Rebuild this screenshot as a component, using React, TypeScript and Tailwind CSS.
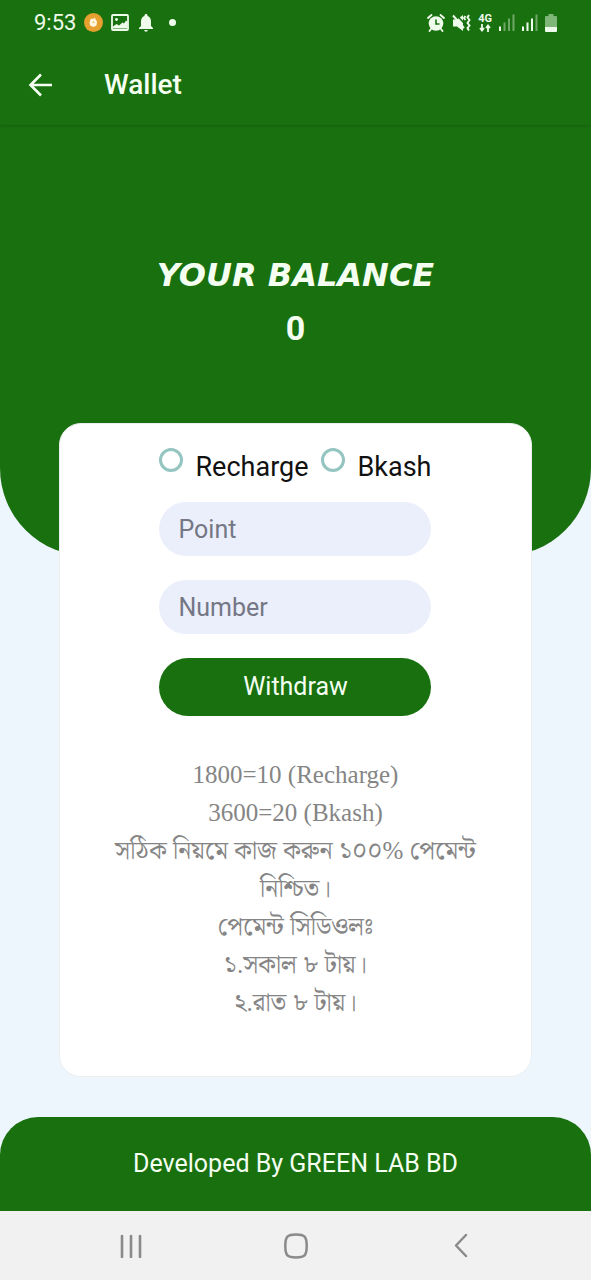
import { useState } from "react";

const notices = [
  "1800=10 (Recharge)",
  "3600=20 (Bkash)",
  "সঠিক নিয়মে কাজ করুন ১০০% পেমেন্ট নিশ্চিত।",
  "পেমেন্ট সিডিওলঃ",
  "১.সকাল ৮ টায়।",
  "২.রাত ৮ টায়।",
];

function PictureIcon() {
  return (
    <svg width="18" height="17" viewBox="0 0 18 17" aria-hidden="true">
      <rect x="1" y="1" width="16" height="15" rx="1" fill="none" stroke="#effcec" strokeWidth="1.8" />
      <circle cx="5.5" cy="5.5" r="1.4" fill="#effcec" />
      <path d="M2 12.5 5.5 10l2.500 1.500 3.500-3L13 9.500l2-3 1.500 1.500V14.500H2Z" fill="#effcec" />
    </svg>
  );
}

function BellIcon() {
  return (
    <svg width="14" height="18" viewBox="0 0 14 18" aria-hidden="true">
      <path d="M7 0c.9 0 1.500.6 1.500 1.500v.6C10.900 2.800 12 5 12 7.500v4.500l2 2v1H0v-1l2-2V7.500C2 5 3.100 2.800 5.500 2.100v-.6C5.500.6 6.100 0 7 0ZM5.200 16h3.600a1.800 1.800 0 0 1-3.600 0Z" fill="#effcec" />
    </svg>
  );
}

function AppBadge() {
  return (
    <svg width="19" height="19" viewBox="0 0 19 19" aria-hidden="true">
      <circle cx="9.5" cy="9.500" r="9.500" fill="#e5a02f" />
      <path d="M7 5.500 9 6l2-1.500.5 2 1.500 2-.5 4L9.500 14 6 12.500 5.500 9.500Z" fill="#fff7e2" />
      <path d="m8.500 10 1-1.500 1 1.500" fill="none" stroke="#e5a02f" strokeWidth=".7" />
    </svg>
  );
}

function AlarmIcon() {
  return (
    <svg width="18" height="18" viewBox="0 0 18 18" aria-hidden="true">
      <circle cx="9" cy="9.500" r="7.300" fill="#effcec" />
      <path d="M1 4 4.500 1M17 4l-3.500-3M4 15l-1.500 2M14 15l1.500 2" stroke="#effcec" strokeWidth="1.900" strokeLinecap="round" />
      <path d="M9 5.500V10h3.500" fill="none" stroke="#19700f" strokeWidth="1.600" />
    </svg>
  );
}

function MuteVibrateIcon() {
  return (
    <svg width="19" height="18" viewBox="0 0 19 18" aria-hidden="true">
      <path d="M1 5.500h4l6-4.500v16l-6-4.500H1Z" fill="#effcec" />
      <path d="M4.500 1 12 9" stroke="#19700f" strokeWidth="1.600" />
      <path d="m1 1.500 11 12.500" stroke="#effcec" strokeWidth="2" />
      <path d="m13.500 2-1.500 2 1.500 2M17 1l-1.500 2.500L17.500 6l-2 3 2 2.500-2 2.500 1.500 2.500" fill="none" stroke="#effcec" strokeWidth="1.900" />
    </svg>
  );
}

function NetworkIcon() {
  return (
    <span className="flex flex-col items-center text-[11px] leading-[10px] font-bold">
      4G
      <svg width="12" height="8" viewBox="0 0 12 8" aria-hidden="true">
        <path d="M3 0v6M1 4l2 2.500L5 4M9 8V2M7 4l2-2.500L11 4" fill="none" stroke="#effcec" strokeWidth="1.800" />
      </svg>
    </span>
  );
}

function SignalIcon({ strength }: { strength: number }) {
  return (
    <svg width="16" height="17" viewBox="0 0 16 17" aria-hidden="true">
      {[0, 1, 2, 3].map((bar) => (
        <rect
          key={bar}
          x={bar * 4.5}
          y={12.5 - bar * 4}
          width="2"
          height={4.5 + bar * 4}
          fill="#effcec"
          opacity={bar < strength ? 1 : 0.4}
        />
      ))}
    </svg>
  );
}

function BatteryIcon() {
  return (
    <svg width="12" height="18" viewBox="0 0 12 18" aria-hidden="true">
      <path d="M3.500 0h5v2H11q1 0 1 1v10H0V3q0-1 1-1h2.500Z" fill="#7db676" />
      <path d="M0 13h12v4q0 1-1 1H1q-1 0-1-1Z" fill="#effcec" />
    </svg>
  );
}

function StatusBar() {
  return (
    <div className="flex h-[45px] items-center justify-between px-[34px] text-[#effcec]">
      <div className="flex items-center gap-2">
        <span className="text-[22px] leading-6">9:53</span>
        <AppBadge />
        <PictureIcon />
        <span className="flex items-center gap-4 pl-0.5">
          <BellIcon />
          <span className="size-[7px] rounded-full bg-[#effcec]" />
        </span>
      </div>
      <div className="flex items-center gap-[7px]">
        <AlarmIcon />
        <MuteVibrateIcon />
        <NetworkIcon />
        <SignalIcon strength={1} />
        <SignalIcon strength={3} />
        <BatteryIcon />
      </div>
    </div>
  );
}

function Choice({ label, checked, onSelect }: { label: string; checked: boolean; onSelect: () => void }) {
  return (
    <label className="flex items-start gap-3 text-[27px] leading-[38px] text-[#111]">
      <input
        type="radio"
        name="method"
        checked={checked}
        onChange={onSelect}
        className="size-6 shrink-0 appearance-none rounded-full border-[3px] border-[#95c5c0] bg-white checked:border-[7px]"
      />
      {label}
    </label>
  );
}

function Field({ label }: { label: string }) {
  return (
    <input
      type="text"
      aria-label={label}
      placeholder={label}
      className="h-[54px] w-full rounded-full bg-[#eaeffb] px-[19px] text-[25px] text-[#222] placeholder:text-[#757785]"
    />
  );
}

export default function App() {
  const [method, setMethod] = useState("");

  return (
    <div className="flex min-h-screen flex-col bg-[#edf6fd] font-['Roboto',sans-serif]">
      <header className="relative bg-[#19700f] text-[#f4fff1] shadow-[0_1px_3px_rgba(0,0,0,0.15)]">
        <StatusBar />
        <div className="flex h-20 items-center gap-[51px] pl-7">
          <button type="button" aria-label="Back">
            <svg width="25" height="24" viewBox="0 0 25 24" fill="none" stroke="currentColor" strokeWidth="2.600" aria-hidden="true">
              <path d="M24 12H2.500M13 1.500 2.500 12 13 22.500" />
            </svg>
          </button>
          <h1 className="text-[28px] leading-8 font-medium">Wallet</h1>
        </div>
      </header>

      <main className="flex flex-1 flex-col pb-10">
        <section className="h-[431px] rounded-b-[88px] bg-[#19700f] pt-[130px] text-center text-[#f4fff1]">
          <h2 className="font-['DejaVu_Sans',sans-serif] text-[32px] leading-10 font-bold italic">YOUR BALANCE</h2>
          <p className="mt-2.5 text-[34px] leading-[46px] font-bold">0</p>
        </section>

        <section className="-mt-[133px] flex w-4/5 flex-1 flex-col items-center self-center rounded-[22px] border border-[#eceff0] bg-white pt-6 pb-[53px]">
          <form className="flex w-[272px] flex-col" onSubmit={(event) => event.preventDefault()}>
            <div className="flex justify-between pb-4">
              <Choice label="Recharge" checked={method === "recharge"} onSelect={() => setMethod("recharge")} />
              <Choice label="Bkash" checked={method === "bkash"} onSelect={() => setMethod("bkash")} />
            </div>
            <div className="flex flex-col gap-6">
              <Field label="Point" />
              <Field label="Number" />
              <button type="submit" className="h-[58px] rounded-full bg-[#19700f] text-[25px] text-[#f4fff1]">
                Withdraw
              </button>
            </div>
          </form>
          <div className="mt-10 w-full px-10 text-center font-['Liberation_Serif','Noto_Serif_Bengali',serif] text-[25px] leading-[38px] text-[#858585]">
            {notices.map((line) => (
              <p key={line}>{line}</p>
            ))}
          </div>
        </section>
      </main>

      <footer className="flex h-[94px] items-center justify-center rounded-t-[38px] bg-[#19700f] text-[25px] text-[#f4fff1]">
        Developed By GREEN LAB BD
      </footer>

      <nav className="grid h-[69px] grid-cols-3 items-center bg-[#f1f1f1] px-12 text-[#8a8a8a]">
        <button type="button" aria-label="Recent apps" className="flex justify-center">
          <svg width="22" height="24" viewBox="0 0 22 24" stroke="currentColor" strokeWidth="2.600" strokeLinecap="round" aria-hidden="true">
            <path d="M2 2v21M11 2v21M20 2v21" />
          </svg>
        </button>
        <button type="button" aria-label="Home" className="flex justify-center">
          <svg width="24" height="26" viewBox="0 0 24 26" fill="none" stroke="currentColor" strokeWidth="2.500" aria-hidden="true">
            <path d="M12 1.500c8.500 0 10.700 1.700 10.700 11.500S20.500 24.500 12 24.500 1.300 22.800 1.300 13 3.500 1.500 12 1.500Z" />
          </svg>
        </button>
        <button type="button" aria-label="Back" className="flex justify-center">
          <svg width="14" height="25" viewBox="0 0 14 25" fill="none" stroke="currentColor" strokeWidth="2.500" strokeLinecap="round" strokeLinejoin="round" aria-hidden="true">
            <path d="M12 2 2 12.500 12 23" />
          </svg>
        </button>
      </nav>
    </div>
  );
}
